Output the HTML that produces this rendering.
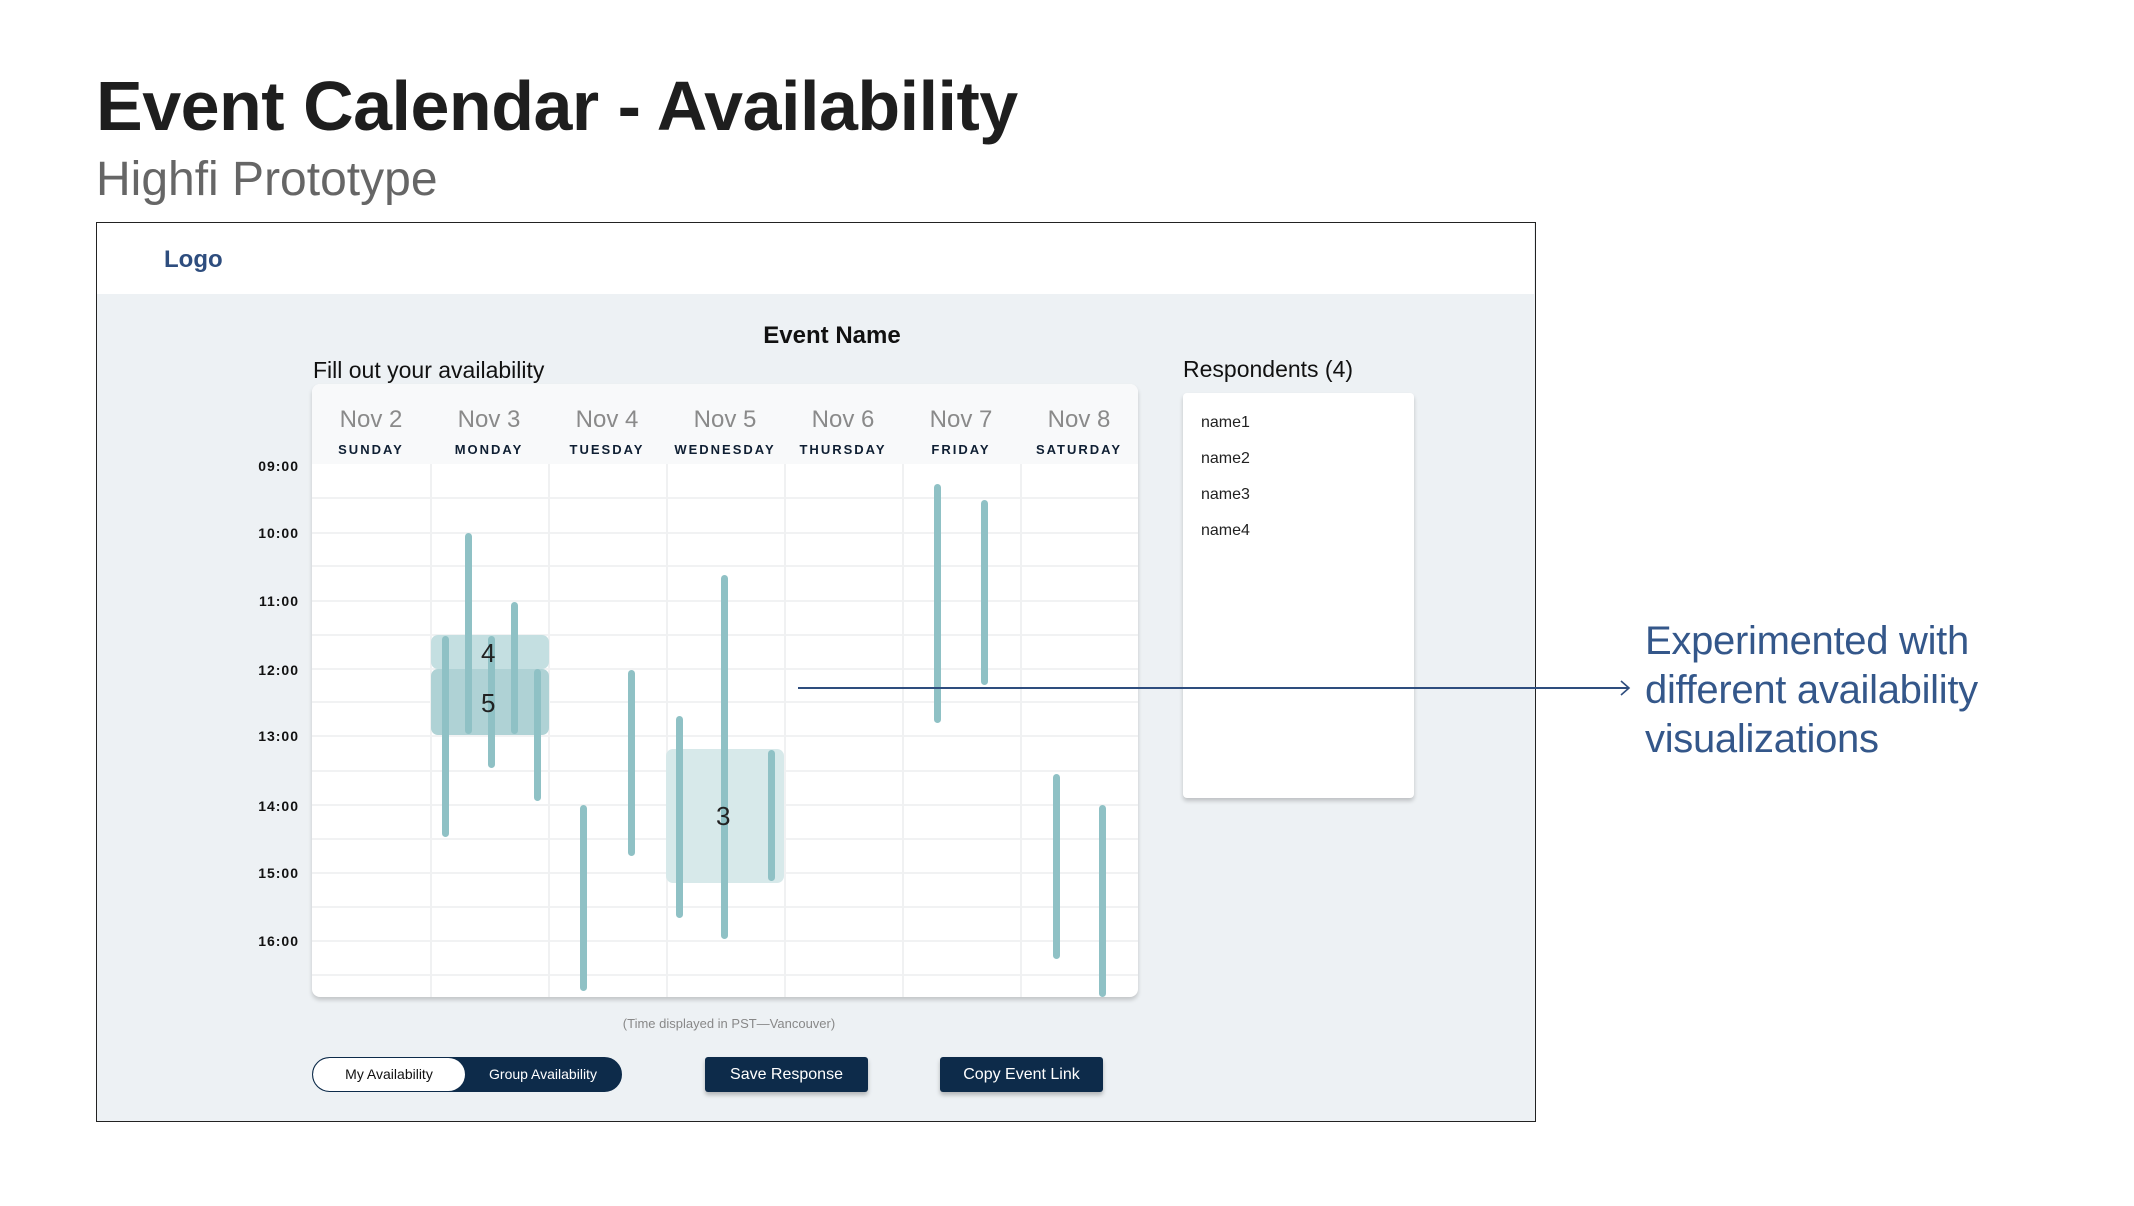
<!DOCTYPE html>
<html><head><meta charset="utf-8"><style>
*{margin:0;padding:0;box-sizing:border-box}
body{width:2134px;height:1206px;background:#fff;position:relative;overflow:hidden;font-family:"Liberation Sans",sans-serif}
.a{position:absolute}
.bar{position:absolute;width:7px;background:#8fc1c5;border-radius:4px}
.col{position:absolute;top:80px;bottom:0;width:2px;background:#f0f1f2}
.hl{position:absolute;left:0;right:0;height:2px;background:#f1f2f3}
.date{position:absolute;top:22px;width:118px;text-align:center;font-size:24px;color:#8a8a8a}
.day{position:absolute;top:58px;width:118px;text-align:center;font-size:13px;font-weight:bold;letter-spacing:2px;color:#0f1f33}
.t{position:absolute;right:1835px;font-size:14px;font-weight:bold;color:#111;letter-spacing:1px;transform:translateY(-50%)}
.btn{position:absolute;top:1057px;height:35px;background:#0d2b4a;color:#fff;font-size:16px;text-align:center;line-height:35px;border-radius:3px;box-shadow:0 3px 4px rgba(0,0,0,.25)}
.nm{position:absolute;left:1201px;font-size:16px;color:#222;transform:translateY(-50%)}
</style></head><body>
<div class="a" style="left:96px;top:66px;font-size:70px;font-weight:bold;color:#1e1e1e;letter-spacing:-0.5px">Event Calendar - Availability</div>
<div class="a" style="left:96px;top:152px;font-size:48px;color:#666">Highfi Prototype</div>

<div class="a" style="left:96px;top:222px;width:1440px;height:900px;border:1.5px solid #222;background:#edf1f4"></div>
<div class="a" style="left:97px;top:223px;width:1437px;height:71px;background:#fff"></div>
<div class="a" style="left:164px;top:246px;font-size:24px;font-weight:bold;color:#2e4d7e">Logo</div>

<div class="a" style="left:732px;top:322px;width:200px;text-align:center;font-size:24px;font-weight:bold;color:#111">Event Name</div>
<div class="a" style="left:313px;top:357px;font-size:23px;color:#111">Fill out your availability</div>
<div class="a" style="left:1183px;top:356px;font-size:23px;color:#111">Respondents (4)</div>

<div class="a" style="left:1183px;top:393px;width:231px;height:405px;background:#fff;border-radius:4px;box-shadow:0 3px 4px rgba(0,0,0,.2)"></div>
<div class="nm" style="top:423px">name1</div>
<div class="nm" style="top:459px">name2</div>
<div class="nm" style="top:495px">name3</div>
<div class="nm" style="top:531px">name4</div>

<div class="a" style="left:312px;top:384px;width:826px;height:613px;background:#fff;border-radius:8px;box-shadow:0 3px 4px rgba(0,0,0,.18);overflow:hidden">
 <div class="a" style="left:0;top:0;right:0;height:80px;background:#f8f9fa"></div>
 <div class="hl" style="top:113px"></div><div class="hl" style="top:148px"></div><div class="hl" style="top:181px"></div><div class="hl" style="top:216px"></div><div class="hl" style="top:250px"></div><div class="hl" style="top:284px"></div><div class="hl" style="top:317px"></div><div class="hl" style="top:351px"></div><div class="hl" style="top:386px"></div><div class="hl" style="top:420px"></div><div class="hl" style="top:454px"></div><div class="hl" style="top:488px"></div><div class="hl" style="top:522px"></div><div class="hl" style="top:556px"></div><div class="hl" style="top:590px"></div>
 <div class="col" style="left:118px"></div><div class="col" style="left:236px"></div><div class="col" style="left:354px"></div><div class="col" style="left:472px"></div><div class="col" style="left:590px"></div><div class="col" style="left:708px"></div>
 <div class="date" style="left:0">Nov 2</div><div class="date" style="left:118px">Nov 3</div><div class="date" style="left:236px">Nov 4</div><div class="date" style="left:354px">Nov 5</div><div class="date" style="left:472px">Nov 6</div><div class="date" style="left:590px">Nov 7</div><div class="date" style="left:708px">Nov 8</div>
 <div class="day" style="left:0">SUNDAY</div><div class="day" style="left:118px">MONDAY</div><div class="day" style="left:236px">TUESDAY</div><div class="day" style="left:354px">WEDNESDAY</div><div class="day" style="left:472px">THURSDAY</div><div class="day" style="left:590px">FRIDAY</div><div class="day" style="left:708px">SATURDAY</div>
</div>
<div class="t" style="top:466px">09:00</div><div class="t" style="top:533px">10:00</div><div class="t" style="top:601px">11:00</div><div class="t" style="top:670px">12:00</div><div class="t" style="top:736px">13:00</div><div class="t" style="top:806px">14:00</div><div class="t" style="top:873px">15:00</div><div class="t" style="top:941px">16:00</div>

<div class="a" style="left:431px;top:635px;width:118px;height:34px;background:#c4dfe1;border-radius:7px"></div>
<div class="a" style="left:431px;top:669px;width:118px;height:66px;background:#afd2d5;border-radius:7px"></div>
<div class="a" style="left:666px;top:749px;width:118px;height:134px;background:#d7e9ea;border-radius:7px"></div>

<div class="bar" style="left:442px;top:636px;height:201px"></div>
<div class="bar" style="left:465px;top:533px;height:201px"></div>
<div class="bar" style="left:488px;top:636px;height:132px"></div>
<div class="bar" style="left:511px;top:602px;height:132px"></div>
<div class="bar" style="left:534px;top:669px;height:132px"></div>
<div class="bar" style="left:580px;top:805px;height:186px"></div>
<div class="bar" style="left:628px;top:670px;height:186px"></div>
<div class="bar" style="left:676px;top:716px;height:202px"></div>
<div class="bar" style="left:721px;top:575px;height:364px"></div>
<div class="bar" style="left:768px;top:750px;height:131px"></div>
<div class="bar" style="left:934px;top:484px;height:239px"></div>
<div class="bar" style="left:981px;top:500px;height:185px"></div>
<div class="bar" style="left:1053px;top:774px;height:185px"></div>
<div class="bar" style="left:1099px;top:805px;height:192px"></div>

<div class="a" style="left:481px;top:638px;font-size:26px;color:#222">4</div>
<div class="a" style="left:481px;top:688px;font-size:26px;color:#222">5</div>
<div class="a" style="left:716px;top:801px;font-size:26px;color:#222">3</div>

<div class="a" style="left:798px;top:687px;width:830px;height:2px;background:#2e4d7e"></div>
<svg class="a" style="left:1618px;top:680px" width="14" height="16"><path d="M3 1 L11 8 L3 15" fill="none" stroke="#2e4d7e" stroke-width="1.6"/></svg>
<div class="a" style="left:1645px;top:617px;font-size:40px;line-height:49px;color:#34578a;letter-spacing:-0.3px">Experimented with<br>different availability<br>visualizations</div>

<div class="a" style="left:529px;top:1016px;width:400px;text-align:center;font-size:13px;color:#888">(Time displayed in PST—Vancouver)</div>

<div class="a" style="left:312px;top:1057px;width:310px;height:35px;border:1.5px solid #0d2b4a;border-radius:18px;background:#0d2b4a;overflow:hidden">
 <div class="a" style="left:0;top:0;width:152px;height:33px;background:#fff;border-radius:17px;text-align:center;line-height:33px;font-size:14px;color:#111">My Availability</div>
 <div class="a" style="left:152px;top:0;width:156px;height:33px;text-align:center;line-height:33px;font-size:14px;color:#fff">Group Availability</div>
</div>
<div class="btn" style="left:705px;width:163px">Save Response</div>
<div class="btn" style="left:940px;width:163px">Copy Event Link</div>
</body></html>
